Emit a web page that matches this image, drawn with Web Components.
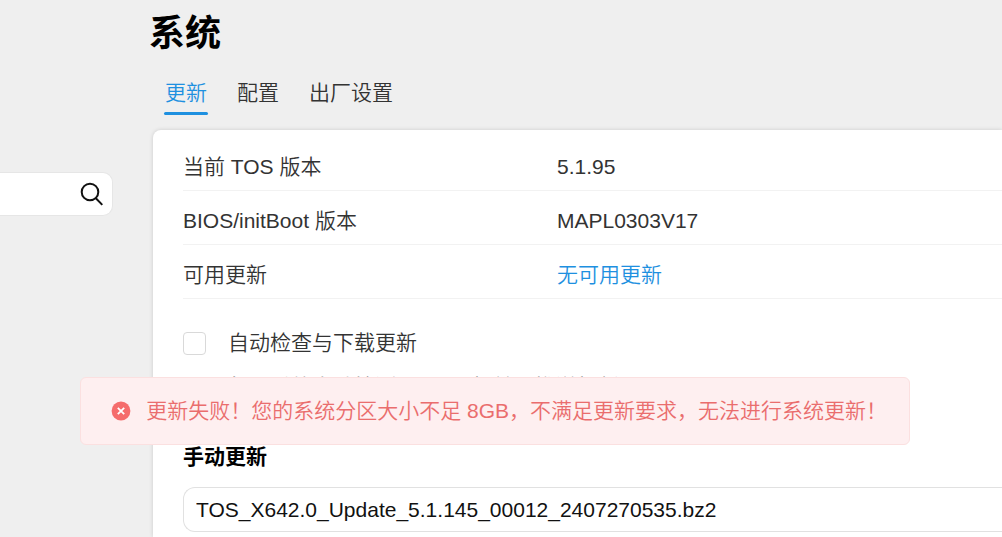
<!DOCTYPE html>
<html lang="zh-CN">
<head>
<meta charset="utf-8">
<title>系统</title>
<style>
html, body { height: 100%; }
body { margin: 0; overflow: hidden; background: #efefef; color: #333; font: 21px/32px "Liberation Sans", "Noto Sans CJK SC", sans-serif; }
</style>
</head>
<body>
<tos-app></tos-app>
<script>
function define(name, html, setup) {
  const template = document.createElement('template');
  template.innerHTML = '<style>*{box-sizing:border-box}</style>' + html;
  customElements.define(name, class extends HTMLElement {
    constructor() {
      super();
      this.attachShadow({ mode: 'open' }).append(template.content.cloneNode(true));
    }
    connectedCallback() { if (setup) setup(this, this.shadowRoot); }
  });
}

define('tos-search', `
<style>
:host { display: block; }
form { display: flex; align-items: center; height: 44px; padding-right: 8px; background: #fff; border: 1px solid #e6e6e6; border-left: 0; border-radius: 0 10px 10px 0; }
input { flex: 1; min-width: 0; height: 40px; border: 0; outline: 0; background: none; font: inherit; }
button { display: flex; padding: 0; border: 0; background: none; }
</style>
<form role="search"><input type="text" aria-label="搜索"><button type="button" aria-label="搜索"><svg width="24" height="26" viewBox="0 0 24 26" fill="none" stroke="#111" stroke-width="2"><circle cx="10" cy="11" r="8.3"/><path d="M15.6 17 22.3 23.9"/></svg></button></form>`);

define('tos-tabs', `
<style>
:host { display: block; }
nav { display: flex; gap: 28px; padding-left: 11px; }
</style>
<nav><slot></slot></nav>`);

define('tos-tab', `
<style>
:host { display: block; }
a { display: block; height: 38px; padding: 0 1px; color: inherit; text-decoration: none; }
:host([active]) a { color: #1e90e0; }
:host([active]) a::after { content: ""; display: block; height: 3px; margin: 3px -1px 0; border-radius: 2px; background: #1e90e0; }
</style>
<a href="#"><slot></slot></a>`);

define('tos-row', `
<style>
:host { display: grid; grid-template-columns: 374px 1fr; align-items: center; height: 54px; padding-top: 6px; border-bottom: 1px solid #f2f2f2; }
</style>
<span><slot></slot></span><span><slot name="value"></slot></span>`);

define('tos-check', `
<style>
:host { display: block; }
label { display: flex; align-items: center; gap: 22px; }
input { appearance: none; width: 23px; height: 23px; margin: 0; background: #fff; border: 1px solid #d9d9d9; border-radius: 4px; }
input:checked { background: #1e90e0; }
</style>
<label><input type="checkbox"><span><slot></slot></span></label>`);

define('tos-toast', `
<style>
:host { display: flex; align-items: center; gap: 15px; height: 68px; padding: 0 22px 0 30px; border: 1px solid #fbe0e0; border-radius: 6px; background: #feeff0; color: #ea6d6d; white-space: nowrap; }
svg { flex: none; }
</style>
<svg width="20" height="20" viewBox="0 0 20 20"><circle cx="10" cy="10" r="9.4" fill="#f56c6c"/><path d="M6.8 6.8 13.2 13.2M13.2 6.8 6.8 13.2" stroke="#fff" stroke-width="1.8"/></svg>
<span role="alert"><slot></slot></span>`);

define('tos-file', `
<style>
:host { display: block; }
input { display: block; width: 100%; height: 45px; padding: 0 12px; color: #111; background: #fff; border: 1px solid #e1e1e1; border-right: 0; border-radius: 12px 0 0 12px; font: inherit; }
</style>
<input type="text" readonly aria-label="手动更新">`, (host, root) => {
  root.querySelector('input').value = host.getAttribute('value');
});

define('tos-app', `
<style>
:host { display: grid; grid-template-columns: 113px 1fr; column-gap: 40px; position: relative; height: 100%; overflow: hidden; font-weight: 350; }
aside { padding-top: 172px; }
main { min-width: 0; }
h1 { margin: 0 0 0 -4px; padding: 8px 0 17px; color: #000; font-size: 36px; line-height: 52px; font-weight: 700; }
section { margin-top: 15px; padding: 7px 0 5px 30px; background: #fff; border-radius: 8px 0 0 0; box-shadow: 0 0 4px rgba(0,0,0,.15); }
section a { color: #1e90e0; text-decoration: none; }
tos-check { margin-top: 28px; }
p { margin: 12px 0 0 45px; color: #666; }
h2 { margin: 38px 0 14px; color: #000; font-size: 21px; line-height: 32px; font-weight: 700; }
tos-toast { position: absolute; left: 8%; top: 377px; }
</style>
<aside><tos-search></tos-search></aside>
<main>
<h1>系统</h1>
<tos-tabs><tos-tab active>更新</tos-tab><tos-tab>配置</tos-tab><tos-tab>出厂设置</tos-tab></tos-tabs>
<section>
<tos-row>当前 TOS 版本<span slot="value">5.1.95</span></tos-row>
<tos-row>BIOS/initBoot 版本<span slot="value">MAPL0303V17</span></tos-row>
<tos-row>可用更新<a href="#" slot="value">无可用更新</a></tos-row>
<tos-check>自动检查与下载更新</tos-check>
<p>每日系统自动检测 TOS 更新并且推送新版</p>
<h2>手动更新</h2>
<tos-file value="TOS_X642.0_Update_5.1.145_00012_2407270535.bz2"></tos-file>
</section>
</main>
<tos-toast>更新失败！您的系统分区大小不足 8GB，不满足更新要求，无法进行系统更新！</tos-toast>`);
</script>
</body>
</html>
